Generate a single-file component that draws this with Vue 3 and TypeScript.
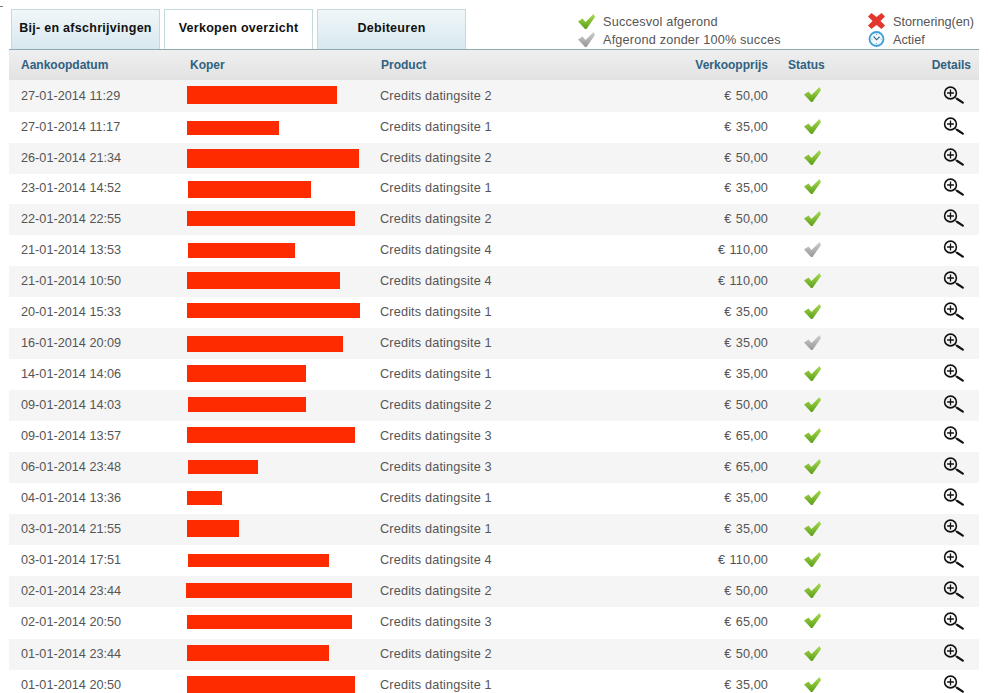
<script setup lang="ts">
interface Sale {
  date: string
  product: number
  price: string
  done: boolean
  h: number
  lift: number
  bar: [number, number, number, number]
}
const raw: [string, number, string, number, number, number, number, number][] = [
  ['27-01-2014 11:29', 2, '50', 32, 187, 337, 86, 104],
  ['27-01-2014 11:17', 1, '35', 31, 187, 279, 121, 135],
  ['26-01-2014 21:34', 2, '50', 31, 187, 359, 149, 168],
  ['23-01-2014 14:52', 1, '35', 30, 188, 311, 181, 198],
  ['22-01-2014 22:55', 2, '50', 31, 187, 355, 211, 226],
  ['21-01-2014 13:53', 4, '110', 31, 188, 295, 243, 258],
  ['21-01-2014 10:50', 4, '110', 31, 187, 340, 272, 289],
  ['20-01-2014 15:33', 1, '35', 31, 187, 360, 303, 318],
  ['16-01-2014 20:09', 1, '35', 31, 187, 343, 336, 352],
  ['14-01-2014 14:06', 1, '35', 31, 187, 306, 365, 382],
  ['09-01-2014 14:03', 2, '50', 31, 188, 306, 397, 412],
  ['09-01-2014 13:57', 3, '65', 31, 187, 355, 427, 443],
  ['06-01-2014 23:48', 3, '65', 31, 188, 258, 460, 474],
  ['04-01-2014 13:36', 1, '35', 31, 187, 222, 491, 505],
  ['03-01-2014 21:55', 1, '35', 31, 187, 239, 520, 537],
  ['03-01-2014 17:51', 4, '110', 31, 188, 329, 554, 567],
  ['02-01-2014 23:44', 2, '50', 31, 186, 352, 583, 598],
  ['02-01-2014 20:50', 3, '65', 32, 187, 352, 615, 629],
  ['01-01-2014 23:44', 2, '50', 31, 187, 329, 645, 661],
  ['01-01-2014 20:50', 1, '35', 31, 187, 355, 676, 693]
]
let top = 80
const sales: Sale[] = raw.map((r, i) => {
  const s: Sale = {
    date: r[0],
    product: r[1],
    price: r[2],
    done: i !== 5 && i !== 8,
    h: r[3],
    lift: i === 3 || i === 17 ? 3 : 1,
    bar: [r[4] - 174, r[6] - top, r[5] - r[4], r[7] - r[6]]
  }
  top += r[3]
  return s
})
const tick = 'M0 7.5 L4.5 4.5 L7.5 8 L15.5 0 L17 3 L8.5 15 L7 15 Z'
</script>

<template>
  <div class="page">
    <span class="corner"></span>
    <div class="top">
      <nav class="tabs">
        <div class="tab">Bij- en afschrijvingen</div>
        <div class="tab active">Verkopen overzicht</div>
        <div class="tab">Debiteuren</div>
      </nav>
      <div class="legend one">
        <div class="entry">
          <svg class="ico" viewBox="0 0 17 15"><defs><linearGradient id="gl" x1="0" y1="0" x2="0" y2="1"><stop offset="0" stop-color="#a8dc4e"/><stop offset="1" stop-color="#5e9f1c"/></linearGradient></defs><path :d="tick" fill="url(#gl)"/></svg>
          <span>Succesvol afgerond</span>
        </div>
        <div class="entry">
          <svg class="ico" viewBox="0 0 17 15"><defs><linearGradient id="gg" x1="0" y1="0" x2="0" y2="1"><stop offset="0" stop-color="#cfcfcf"/><stop offset="1" stop-color="#979797"/></linearGradient></defs><path :d="tick" fill="url(#gg)"/></svg>
          <span>Afgerond zonder 100% succes</span>
        </div>
      </div>
      <div class="legend two">
        <div class="entry">
          <svg class="ico big" viewBox="0 0 17 16"><path d="M0 3.5 L3.5 0 L8.5 4 L13.5 0 L17 3.5 L12.5 8 L17 12.5 L13.5 16 L8.5 12 L3.5 16 L0 12.5 L4.5 8 Z" fill="#e3372e"/></svg>
          <span>Stornering(en)</span>
        </div>
        <div class="entry">
          <svg class="ico big" viewBox="0 0 17 16"><circle cx="8.5" cy="8" r="7" fill="#eef8fd" stroke="#3f9ed9" stroke-width="1.8"/><path d="M5.6 5.4 L8.5 8.8 L11.6 5.8" fill="none" stroke="#2f5873" stroke-width="1.1"/><circle cx="8.5" cy="3.4" r=".6" fill="#7ba6c0"/><circle cx="8.5" cy="12.6" r=".7" fill="#7ba6c0"/><circle cx="3.9" cy="8" r=".6" fill="#7ba6c0"/><circle cx="13.1" cy="8" r=".6" fill="#7ba6c0"/></svg>
          <span>Actief</span>
        </div>
      </div>
    </div>
    <div class="row head">
      <div class="c-date">Aankoopdatum</div>
      <div class="c-buyer">Koper</div>
      <div class="c-prod">Product</div>
      <div class="c-price">Verkoopprijs</div>
      <div class="c-status">Status</div>
      <div class="c-det">Details</div>
    </div>
    <div
      v-for="(s, i) in sales"
      :key="i"
      class="row item"
      :class="{ odd: i % 2 === 0 }"
      :style="{ height: s.h + 'px', paddingBottom: s.lift + 'px' }"
    >
      <div class="c-date">{{ s.date }}</div>
      <div class="c-buyer cell-bar">
        <div
          class="bar"
          :style="{ marginLeft: s.bar[0] + 'px', marginTop: s.bar[1] + 'px', width: s.bar[2] + 'px', height: s.bar[3] + 'px' }"
        ></div>
      </div>
      <div class="c-prod">Credits datingsite {{ s.product }}</div>
      <div class="c-price">€ {{ s.price }},00</div>
      <div class="c-status">
        <svg class="ico" viewBox="0 0 17 15"><path :d="tick" :fill="s.done ? 'url(#gl)' : 'url(#gg)'"/></svg>
      </div>
      <div class="c-det">
        <svg class="lens" viewBox="0 0 21 18">
          <circle cx="7.5" cy="7" r="5.9" fill="none" stroke="#111" stroke-width="1.6"/>
          <path d="M7.5 3.6 V10.4 M4.1 7 H10.9" stroke="#111" stroke-width="1.3"/>
          <path d="M12.2 11.5 L14.5 13.2" stroke="#333" stroke-width="1.2"/>
          <path d="M14.3 13 L19.8 16.6" stroke="#111" stroke-width="2.2" stroke-linecap="round"/>
        </svg>
      </div>
    </div>
  </div>
</template>

<style>
html, body { margin: 0; background: #fff; overflow: hidden; }
</style>

<style scoped>
.page {
  width: 988px;
  height: 693px;
  overflow: hidden;
  position: relative;
  font-family: "Liberation Sans", Arial, sans-serif;
  font-size: 12.7px;
  color: #555;
  box-sizing: border-box;
  padding-left: 9px;
  padding-right: 9px;
}
.corner {
  position: absolute;
  left: 0;
  top: 0;
  width: 3px;
  height: 6px;
  border-bottom: 1px solid #777;
}
.top {
  display: flex;
  height: 50px;
  box-sizing: border-box;
  padding: 9px 0 0 2px;
  border-bottom: 1px solid #8fa9b3;
}
.tabs { display: flex; gap: 4px; }
.tab {
  width: 149px;
  height: 40px;
  box-sizing: border-box;
  border: 1px solid #c4dae0;
  border-bottom: 0;
  background: linear-gradient(#f1f7f9, #d7e8ee);
  color: #111;
  font-weight: bold;
  font-size: 12.5px;
  letter-spacing: 0.28px;
  display: flex;
  align-items: center;
  justify-content: center;
  padding-bottom: 3px;
}
.tab.active { background: #fff; }
.legend { display: flex; flex-direction: column; gap: 3px; padding-top: 5px; }
.legend.one { margin-left: 112px; width: 290px; }
.entry { display: flex; align-items: center; gap: 8px; height: 15px; }
.entry span { white-space: nowrap; }
.one .entry span { letter-spacing: 0.18px; }
.ico { width: 17px; height: 15px; display: block; flex: none; }
.one .ico { margin-top: -1px; }
.ico.big { height: 16px; margin-top: -1px; }
.row {
  display: grid;
  grid-template-columns: 165px 193px 313px 90px 86px 1fr;
  align-items: center;
}
.head {
  height: 30px;
  background: linear-gradient(#efefef, #e2e2e2);
  color: #2f6181;
  font-weight: bold;
  font-size: 12px;
  padding-bottom: 1px;
  box-sizing: border-box;
}
.item { background: #fff; box-sizing: border-box; }
.item.odd { background: #f5f5f5; }
.c-date { padding-left: 12px; white-space: nowrap; }
.c-buyer { padding-left: 16px; }
.c-prod { padding-left: 13px; white-space: nowrap; letter-spacing: 0.16px; }
.head .c-prod { padding-left: 14px; letter-spacing: 0; }
.c-price { text-align: right; white-space: nowrap; padding-right: 2px; }
.item .c-price { word-spacing: 0.8px; letter-spacing: 0.1px; }
.c-status { display: flex; }
.head .c-status { padding-left: 18px; }
.item .c-status { padding-left: 34px; }
.item .c-status .ico { margin-top: -2px; }
.c-det { display: flex; justify-content: flex-end; padding-right: 15px; }
.item .c-det .lens { margin-top: -2px; }
.head .c-det { padding-right: 8px; }
.cell-bar { align-self: start; padding-left: 0; }
.bar { background: #ff2b00; }
.lens { width: 21px; height: 18px; display: block; }
</style>
